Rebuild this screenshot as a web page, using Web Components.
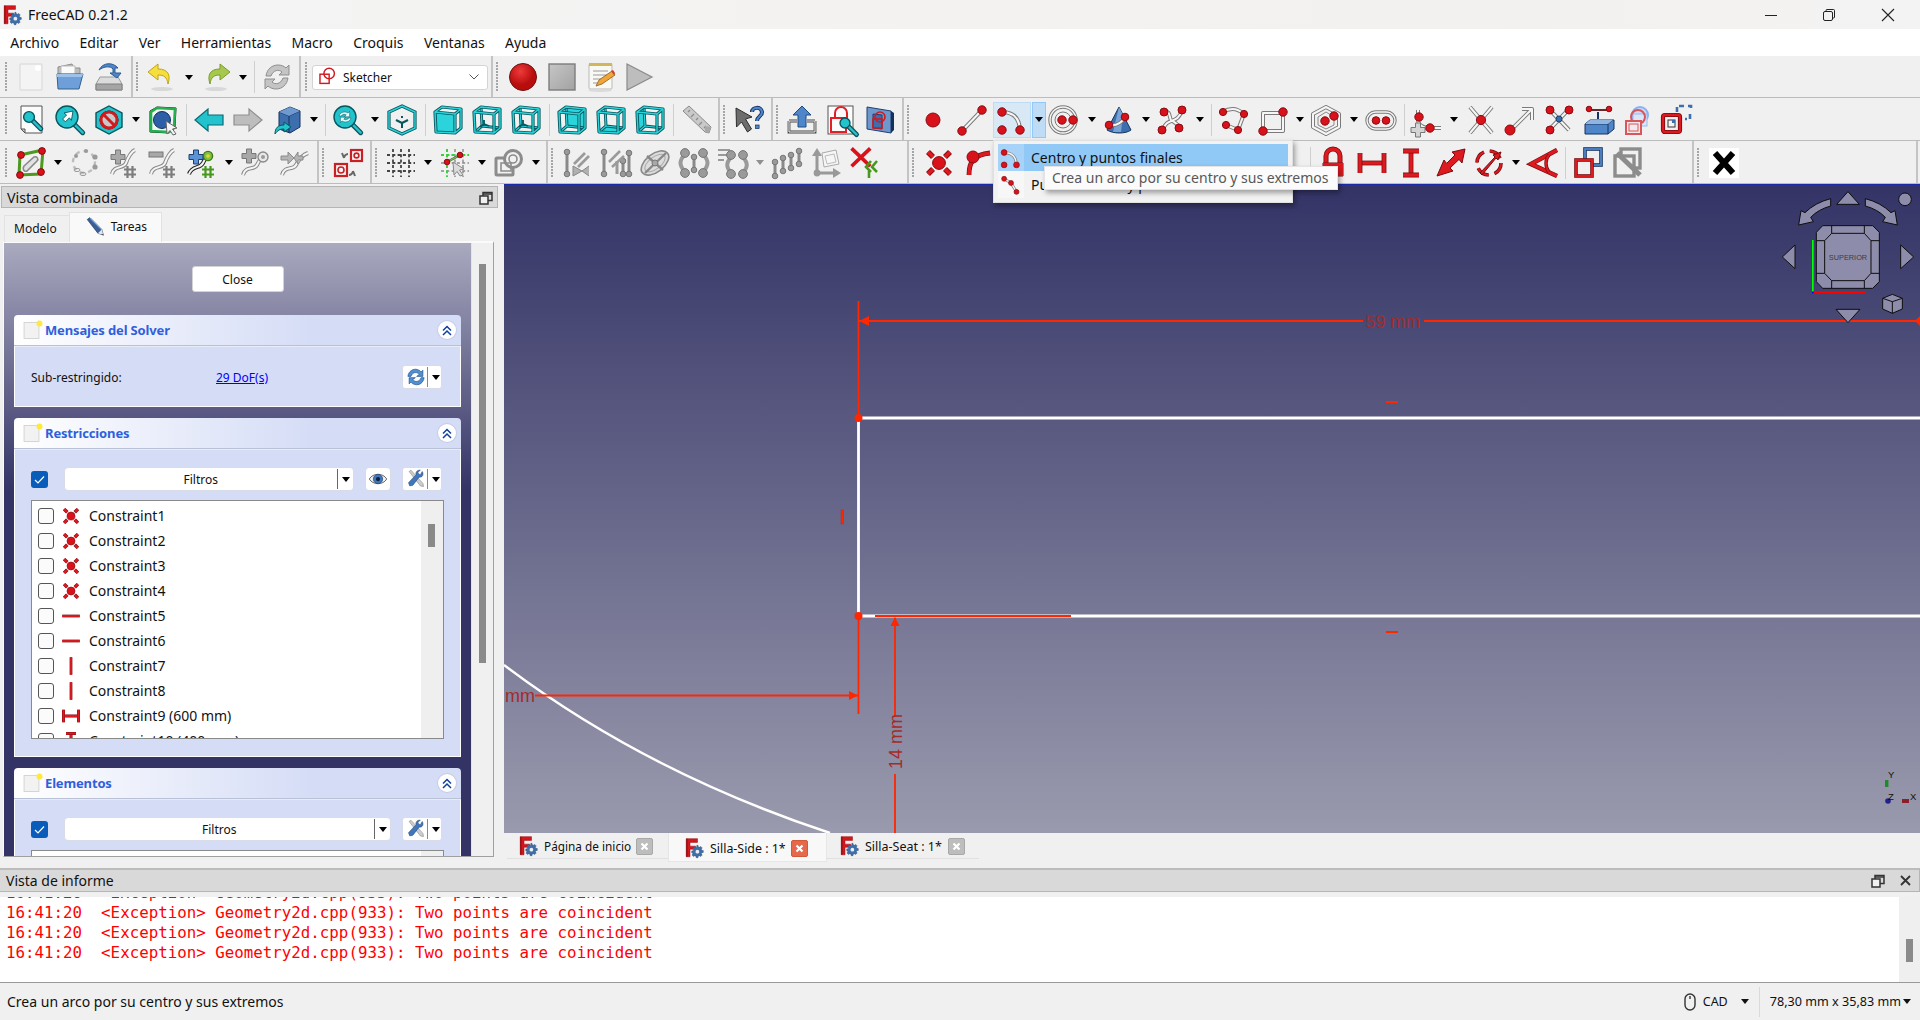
<!DOCTYPE html>
<html lang="es">
<head>
<meta charset="utf-8">
<title>FreeCAD 0.21.2</title>
<style>
  html, body { margin: 0; padding: 0; background: #f0f0f0; }
  body { width: 1920px; height: 1020px; overflow: hidden; font-family: "Noto Sans", "Open Sans", sans-serif; font-size: 14px; color: #111; }
</style>
</head>
<body>
<fc-app>
  <fc-titlebar>FreeCAD 0.21.2</fc-titlebar>
  <fc-menubar>
    <fc-menu>Archivo</fc-menu><fc-menu>Editar</fc-menu><fc-menu>Ver</fc-menu><fc-menu>Herramientas</fc-menu><fc-menu>Macro</fc-menu><fc-menu>Croquis</fc-menu><fc-menu>Ventanas</fc-menu><fc-menu>Ayuda</fc-menu>
  </fc-menubar>

  <fc-toolbar height="42">
    <fc-group first>
      <fc-tool icon="new"></fc-tool><fc-tool icon="open"></fc-tool><fc-tool icon="save"></fc-tool>
    </fc-group>
    <fc-group>
      <fc-tool icon="undo" menu></fc-tool><fc-tool icon="redo" menu></fc-tool><fc-sep></fc-sep><fc-tool icon="refresh"></fc-tool>
    </fc-group>
    <fc-group narrow><fc-workbench>Sketcher</fc-workbench></fc-group>
    <fc-group last>
      <fc-tool icon="record"></fc-tool><fc-tool icon="stop"></fc-tool><fc-tool icon="macro"></fc-tool><fc-tool icon="play"></fc-tool>
    </fc-group>
  </fc-toolbar>

  <fc-toolbar height="43">
    <fc-group first>
      <fc-tool icon="fitall"></fc-tool><fc-tool icon="fitsel"></fc-tool><fc-tool icon="nodraw" menu></fc-tool><fc-tool icon="selbox"></fc-tool><fc-sep></fc-sep>
      <fc-tool icon="back"></fc-tool><fc-tool icon="forward"></fc-tool><fc-tool icon="bluebox" menu></fc-tool><fc-sep></fc-sep>
      <fc-tool icon="zoomsync" menu></fc-tool><fc-tool icon="iso"></fc-tool><fc-sep></fc-sep>
      <fc-tool icon="vfront"></fc-tool><fc-tool icon="vtop"></fc-tool><fc-tool icon="vright"></fc-tool><fc-sep></fc-sep>
      <fc-tool icon="vrear"></fc-tool><fc-tool icon="vbottom"></fc-tool><fc-tool icon="vleft"></fc-tool><fc-sep></fc-sep>
      <fc-tool icon="ruler"></fc-tool>
    </fc-group>
    <fc-group><fc-tool icon="whatsthis"></fc-tool></fc-group>
    <fc-group><fc-tool icon="leave"></fc-tool><fc-tool icon="viewsketch"></fc-tool><fc-tool icon="sectionplane"></fc-tool></fc-group>
    <fc-group last>
      <fc-tool icon="point"></fc-tool><fc-tool icon="line"></fc-tool><fc-tool icon="arc" menu active></fc-tool><fc-tool icon="circle" menu></fc-tool><fc-tool icon="conic" menu></fc-tool><fc-tool icon="bspline" menu></fc-tool><fc-sep></fc-sep>
      <fc-tool icon="polyline"></fc-tool><fc-tool icon="rect" menu></fc-tool><fc-tool icon="polygon" menu></fc-tool><fc-tool icon="slot"></fc-tool><fc-sep></fc-sep>
      <fc-tool icon="fillet" menu></fc-tool><fc-tool icon="trim"></fc-tool><fc-tool icon="extend"></fc-tool><fc-tool icon="split"></fc-tool><fc-tool icon="external"></fc-tool><fc-tool icon="carbon"></fc-tool><fc-tool icon="construction"></fc-tool>
    </fc-group>
  </fc-toolbar>

  <fc-toolbar height="43">
    <fc-group first>
      <fc-tool icon="closedshape" menu></fc-tool><fc-tool icon="selassoc"></fc-tool><fc-tool icon="addpole"></fc-tool><fc-tool icon="subpole"></fc-tool><fc-tool icon="bluepole" menu></fc-tool><fc-tool icon="insertknot"></fc-tool><fc-tool icon="joincurve"></fc-tool>
    </fc-group>
    <fc-group><fc-tool icon="rendermode"></fc-tool></fc-group>
    <fc-group><fc-tool icon="grid" menu></fc-tool><fc-tool icon="snap" menu></fc-tool><fc-tool icon="renderorder" menu></fc-tool></fc-group>
    <fc-group>
      <fc-tool icon="symh"></fc-tool><fc-tool icon="symv"></fc-tool><fc-tool icon="ellipsecross"></fc-tool><fc-tool icon="pairs"></fc-tool><fc-tool icon="pairs2" menu dim></fc-tool><fc-tool icon="rising"></fc-tool><fc-tool icon="axes"></fc-tool><fc-tool icon="removeaxes"></fc-tool><fc-gap width="20.5"></fc-gap>
    </fc-group>
    <fc-group>
      <fc-tool icon="coincident"></fc-tool><fc-tool icon="tangent"></fc-tool>
      <fc-gap width="272"></fc-gap><fc-tool icon="block"></fc-tool><fc-sep width="5"></fc-sep>
      <fc-tool icon="lock"></fc-tool><fc-tool icon="hdist"></fc-tool><fc-tool icon="vdist"></fc-tool><fc-tool icon="dist"></fc-tool><fc-tool icon="radius" menu></fc-tool><fc-tool icon="angle"></fc-tool><fc-sep></fc-sep>
      <fc-tool icon="toggle"></fc-tool><fc-tool icon="togglegray"></fc-tool><fc-gap width="43"></fc-gap>
    </fc-group>
    <fc-group end><fc-tool icon="blackx"></fc-tool></fc-group>
  </fc-toolbar>

  <fc-workspace>
    <fc-dock slot="left" title-text="Vista combinada">
      <fc-tabs>
        <fc-tab>Modelo</fc-tab>
        <fc-tab current icon="pencil">Tareas</fc-tab>
      </fc-tabs>
      <fc-taskview>
        <fc-close-button>Close</fc-close-button>
        <fc-taskpanel title-text="Mensajes del Solver">
          <fc-solver-row label="Sub-restringido:" link="29 DoF(s)"></fc-solver-row>
        </fc-taskpanel>
        <fc-taskpanel title-text="Restricciones">
          <fc-filter-row eye></fc-filter-row>
          <fc-list thumb>
            <fc-list-row icon="coincident">Constraint1</fc-list-row>
            <fc-list-row icon="coincident">Constraint2</fc-list-row>
            <fc-list-row icon="coincident">Constraint3</fc-list-row>
            <fc-list-row icon="coincident">Constraint4</fc-list-row>
            <fc-list-row icon="lhoriz">Constraint5</fc-list-row>
            <fc-list-row icon="lhoriz">Constraint6</fc-list-row>
            <fc-list-row icon="lvert">Constraint7</fc-list-row>
            <fc-list-row icon="lvert">Constraint8</fc-list-row>
            <fc-list-row icon="hdist">Constraint9 (600 mm)</fc-list-row>
            <fc-list-row icon="vdist">Constraint10 (400 mm)</fc-list-row>
          </fc-list>
        </fc-taskpanel>
        <fc-taskpanel title-text="Elementos">
          <fc-filter-row></fc-filter-row>
          <fc-list>
            <fc-element-row></fc-element-row>
          </fc-list>
        </fc-taskpanel>
      </fc-taskview>
    </fc-dock>
    <fc-viewarea slot="right">
      <fc-viewport></fc-viewport>
      <fc-doc-tabs>
        <fc-doc-tab width="161" pad="12" end="15" size="11.8">Página de inicio</fc-doc-tab>
        <fc-doc-tab width="159" pad="16" end="18" size="12.4" current>Silla-Side : 1*</fc-doc-tab>
        <fc-doc-tab width="152" pad="13" end="14" size="12.5">Silla-Seat : 1*</fc-doc-tab>
      </fc-doc-tabs>
    </fc-viewarea>
  </fc-workspace>

  <fc-report title-text="Vista de informe">
    <fc-log-line>16:41:20  &lt;Exception&gt; Geometry2d.cpp(933): Two points are coincident</fc-log-line>
    <fc-log-line>16:41:20  &lt;Exception&gt; Geometry2d.cpp(933): Two points are coincident</fc-log-line>
    <fc-log-line>16:41:20  &lt;Exception&gt; Geometry2d.cpp(933): Two points are coincident</fc-log-line>
    <fc-log-line>16:41:20  &lt;Exception&gt; Geometry2d.cpp(933): Two points are coincident</fc-log-line>
  </fc-report>

  <fc-statusbar>Crea un arco por su centro y sus extremos</fc-statusbar>

  <fc-arc-menu></fc-arc-menu>
</fc-app>

<script>
// small drawing helpers, everything sits in a 32x32 box
const dot = (x, y, r = 4) => `<circle cx="${x}" cy="${y}" r="${r}" fill="#d8111b" stroke="#8a0b10" stroke-width="1"/>`
const grayDot = (x, y, r = 3.4) => `<circle cx="${x}" cy="${y}" r="${r}" fill="#9a9a9a" stroke="#777"/>`
const wire = (d, c = '#7a7a7a') => `<path d="${d}" fill="none" stroke="${c}" stroke-width="4" stroke-linejoin="round"/><path d="${d}" fill="none" stroke="#f6f6f6" stroke-width="2" stroke-linejoin="round"/>`
const hash = (x, y, c = '#7d7d7d') => `<path d="M${x - 2.5} ${y - 6}v12M${x + 2.5} ${y - 6}v12M${x - 6} ${y - 2.5}h12M${x - 6} ${y + 2.5}h12" stroke="${c}" stroke-width="2.2" fill="none"/>`
const plus = (x, y, f = '#a8a8a8', s = '#777') => `<path d="M${x - 2.5} ${y - 7}h5v4.5h4.5v5h-4.5v4.5h-5v-4.5h-4.5v-5h4.5z" fill="${f}" stroke="${s}"/>`
const bar = (x1, y1, x2, y2) => `<path d="M${x1} ${y1}L${x2} ${y2}" stroke="#8a8a8a" stroke-width="3"/>${grayDot(x1, y1, 2.8)}${grayDot(x2, y2, 2.8)}`
const redLine = (d, w = 3) => `<path d="${d}" fill="none" stroke="#7c0a0e" stroke-width="${w + 1.4}"/><path d="${d}" fill="none" stroke="#dc1a20" stroke-width="${w}"/>`

const cubeEdges = 'M3 8L10 3L29 5L29 24L23 29L4 28ZM3 8L23 10L23 29M23 10L29 5'
const cubeBack = 'M10 3L11 22L4 28M11 22L29 24'
const faces = {
  front: '3 8 23 10 23 29 4 28',
  back: '10 3 29 5 29 24 11 22',
  bottom: '4 28 11 22 29 24 23 29',
  left: '3 8 10 3 11 22 4 28',
}
const cube = (face, mark) => `
  ${face ? `<polygon points="${faces[face]}" fill="#2bd4da"/>` : ''}
  ${face === 'front' ? '' : `<path d="${cubeBack}" fill="none" stroke="#07565e" stroke-width="3"/><path d="${cubeBack}" fill="none" stroke="#2bd4da" stroke-width="1.2"/>`}
  <path d="${cubeEdges}" fill="none" stroke="#07565e" stroke-width="3.2" stroke-linejoin="round"/>
  <path d="${cubeEdges}" fill="none" stroke="#2bd4da" stroke-width="1.4" stroke-linejoin="round"/>
  ${mark ? '<path d="M13 16v4l-4 3M13 20l5 2" fill="none" stroke="#07565e" stroke-width="1.8"/>' : ''}`
const lens = (x, y, r, c = '#22c3cc') => `<path d="M${x + r * 0.7} ${y + r * 0.7}L${x + r * 0.7 + 8} ${y + r * 0.7 + 8}" stroke="#07565e" stroke-width="5" stroke-linecap="round"/><path d="M${x + r * 0.7} ${y + r * 0.7}L${x + r * 0.7 + 8} ${y + r * 0.7 + 8}" stroke="${c}" stroke-width="2.4" stroke-linecap="round"/><circle cx="${x}" cy="${y}" r="${r}" fill="${c}" stroke="#07565e" stroke-width="1.4"/>`
const cursor = (x, y, f = '#f4f4f4', s = '#666') => `<path d="M${x} ${y}L${x + 11} ${y + 7}L${x + 6.5} ${y + 8}L${x + 10} ${y + 13}L${x + 7} ${y + 14}L${x + 4} ${y + 9.5}L${x + 1} ${y + 13}Z" fill="${f}" stroke="${s}"/>`
const fcLogo = `
  <path d="M2 1h18v6h-12v6h9v5h-9v12h-6z" fill="#d5161c" stroke="#8c0d11" stroke-width=".8"/>
  <path d="M2 1h2v29h-2z" fill="#8c0d11"/>
  <g transform="translate(11.6 11.6)">
    <path d="M8.5 0l2.2 0 .5 2.8 2.2.9 2.3-1.6 2.8 2.8-1.6 2.3.9 2.2 2.8.5v3.4l-2.8.5-.9 2.2 1.6 2.3-2.8 2.8-2.3-1.6-2.2.9-.5 2.8h-3.4l-.5-2.8-2.2-.9-2.3 1.6-2.8-2.8 1.6-2.3-.9-2.2L-1 14v-3.4l2.8-.5.9-2.2-1.6-2.3 2.8-2.8 2.3 1.6 2.2-.9z" fill="#3f6ea8" stroke="#1f4170" stroke-width=".7" transform="scale(.86)"/>
    <circle cx="8.2" cy="10.2" r="3" fill="#e8eef6"/>
  </g>`

const icons = {
  new: '<rect x="5" y="3" width="22" height="26" rx="1" fill="#f4f4f4" stroke="#dedede" stroke-width="1.4"/><circle cx="23" cy="7" r="3" fill="#fff"/>',
  open: '<path d="M4 6l14-3 2 4h6v6H4z" fill="#bdbdbd" stroke="#8d8d8d"/><path d="M7 5h14v8H7z" fill="#fafafa" stroke="#bbb"/><path d="M3 13h26l-4 15H4z" fill="#6e9fd8" stroke="#35608f"/><path d="M3 13h26l-1 3H3z" fill="#9cc1ea"/>',
  save: '<path d="M7 16l-4 7v6h26v-6l-4-7z" fill="#dcdcdc" stroke="#9a9a9a"/><path d="M3 23h26v6H3z" fill="#a5a5a5" stroke="#808080"/><path d="M6 9C10 1 20 1 25 7l-3 0v5l6 0-4 5-7-5 3 0V8C18 5 11 5 6 9z" fill="#4f86c9" stroke="#2c5a92"/>',
  undo: '<path d="M12 3L2 11l10 8v-5c6 0 9 2 10 9 3-9 0-15-10-15z" fill="#f6df3c" stroke="#c0a415"/><ellipse cx="16" cy="28" rx="11" ry="2" fill="#d8d8d8"/>',
  redo: '<path d="M20 3l10 8-10 8v-5c-6 0-9 2-10 9-3-9 0-15 10-15z" fill="#a6c84c" stroke="#7d9b2d"/><ellipse cx="16" cy="28" rx="11" ry="2" fill="#d8d8d8"/>',
  refresh: '<path d="M5 15C6 8 11 4 17 4c3 0 6 1 8 3l3-3v10H18l3-3c-3-3-9-2-11 4z" fill="#c4c4c4" stroke="#8e8e8e"/><path d="M27 17c-1 7-6 11-12 11-3 0-6-1-8-3l-3 3V18h10l-3 3c3 3 9 2 11-4z" fill="#c4c4c4" stroke="#8e8e8e"/>',
  sketcher: '<rect x="3" y="11" width="14" height="14" fill="none" stroke="#d01a20" stroke-width="2.2"/><circle cx="17" cy="10" r="8" fill="none" stroke="#d01a20" stroke-width="2.2"/>',
  record: '<defs><radialGradient id="r" cx=".4" cy=".3"><stop offset="0" stop-color="#ee3a3a"/><stop offset="1" stop-color="#b80d0d"/></radialGradient></defs><circle cx="16" cy="16" r="13.5" fill="url(#r)" stroke="#6d1010"/>',
  stop: '<defs><linearGradient id="s" x2="1" y2="1"><stop offset="0" stop-color="#c6c6c6"/><stop offset="1" stop-color="#a2a2a2"/></linearGradient></defs><rect x="3" y="3" width="26" height="26" fill="url(#s)" stroke="#7d7d7d" stroke-width="1.4"/>',
  macro: '<rect x="4" y="3" width="23" height="25" rx="1" fill="#f8f8f4" stroke="#b9b9b9"/><rect x="4" y="2" width="23" height="3" fill="#d2b65a"/><path d="M8 10h15M8 14h15M8 18h11M8 22h8" stroke="#9a9a9a" stroke-width="1.2"/><path d="M11 25l3-6 13-9 3 4-13 9z" fill="#f0a53a" stroke="#8a5a14" stroke-width=".8"/><path d="M26 10l3 4 1-2-2-3z" fill="#d23c2c"/><ellipse cx="15" cy="29.5" rx="12" ry="1.5" fill="#dadada"/>',
  play: '<path d="M3 3l25 13L3 29z" fill="#bdbdbd" stroke="#8a8a8a" stroke-width="1.2"/>',

  fitall: `<path d="M6 2h21v27H10l-4-4z" fill="#fbfbfb" stroke="#555"/><path d="M6 25l4 4v-4z" fill="#ccc" stroke="#555"/>${lens(14, 13, 5.4)}`,
  fitsel: `${lens(13, 13, 11)}<path d="M19 7l-9 2 2.6 2-4 4 2.8 2.8 4-4 2 2.6z" fill="#fff" stroke="#07565e" stroke-width=".9"/>`,
  nodraw: '<path d="M16 2l13 7v14l-13 7L3 23V9z" fill="#22c3cc" stroke="#07565e" stroke-width="1.4"/><circle cx="16" cy="16" r="9" fill="#c8c8c8" stroke="#101010" stroke-width="1"/><circle cx="16" cy="16" r="8" fill="none" stroke="#cf1a20" stroke-width="3"/><path d="M10 10l12 12" stroke="#cf1a20" stroke-width="3"/>',
  selbox: `<path d="M3 7L10 3L29 4L28 24L22 29L3 28Z" fill="#f4f4f4" stroke="#1a1a1a" stroke-width="1"/><path d="M4 8l6-4 18 1-1 19-5 4-18-1z" fill="none" stroke="#22b14c" stroke-width="2.6"/><circle cx="15" cy="16" r="8.5" fill="#2d5fa6" stroke="#11305f"/>${cursor(19, 17)}`,
  back: '<path d="M2 16L15 5v6h15v10H15v6z" fill="#22c3cc" stroke="#0a6a74" stroke-width="1.2"/>',
  forward: '<path d="M30 16L17 5v6H2v10h15v6z" fill="#bdbdbd" stroke="#8f8f8f" stroke-width="1.2"/>',
  bluebox: '<path d="M8 8l11-5 10 4v16l-10 6-11-4z" fill="#3d6eae" stroke="#14335f"/><path d="M8 8l10 4 11-5M18 12v17" fill="none" stroke="#14335f"/><path d="M8 8l10 4 11-5-10-4z" fill="#6e9ad0"/><path d="M4 30c0-6 3-9 9-9v-3l7 5-7 5v-3c-4 0-6 1-9 5z" fill="#22c3cc" stroke="#07565e"/>',
  zoomsync: `${lens(13, 13, 11)}<path d="M7 12c1-4 6-5 9-3l1.6-1.6v5.4h-5.4l2-2c-2-1-4-.4-5 1.2zM19 14c-1 4-6 5-9 3l-1.6 1.6v-5.4h5.4l-2 2c2 1 4 .4 5-1.2z" fill="#e8f8f8" stroke="#07565e" stroke-width=".5"/>`,
  iso: '<path d="M16 2l13 6v16l-13 6-13-6V8z" fill="none" stroke="#07565e" stroke-width="3.2"/><path d="M16 2l13 6v16l-13 6-13-6V8z" fill="none" stroke="#2bd4da" stroke-width="1.4"/><path d="M16 19v5M16 19l-6-3M16 19l6-3" stroke="#07565e" stroke-width="2"/><path d="M16 12v2" stroke="#07565e" stroke-width="2"/>',
  vfront: cube('front'),
  vtop: cube(null, true),
  vright: cube(null, true),
  vrear: cube('back'),
  vbottom: cube('bottom'),
  vleft: cube('left'),
  ruler: '<path d="M3 7l6-5 22 21-2 6-4-1z" fill="#c9c9c9" stroke="#8b8b8b"/><path d="M10 6l-2 2M14 10l-3 3M18 14l-2 2M22 18l-3 3M26 22l-2 2" stroke="#8b8b8b" stroke-width="1.2"/><path d="M25 28v-6l6 1-2 6z" fill="#a9a9a9"/>',
  whatsthis: '<path d="M3 4l16 9-6.5 2 6 10-4 3-6-10-5 5z" fill="#6d6d6d" stroke="#2d2d2d"/><path d="M19 8c0-5 9-6 10 0 0 5-5 4-5 9" fill="none" stroke="#14305f" stroke-width="4"/><path d="M19 8c0-5 9-6 10 0 0 5-5 4-5 9" fill="none" stroke="#4f86c9" stroke-width="2.2"/><rect x="22.5" y="21" width="3.6" height="3.6" fill="#4f86c9" stroke="#14305f" stroke-width=".7"/>',
  leave: '<path d="M3 17h8M21 17h8M3 17v11h26V17" fill="none" stroke="#444" stroke-width="2.8"/><path d="M3 17h8M21 17h8M3 17v11h26V17" fill="none" stroke="#f4f4f4" stroke-width="1"/><path d="M12 23V11H7l9-9 9 9h-5v12z" fill="#4f86c9" stroke="#1e4a80"/>',
  viewsketch: `<rect x="3" y="2" width="25" height="28" fill="#fbfbfb" stroke="#555"/><rect x="6" y="14" width="15" height="14" fill="none" stroke="#e01f26" stroke-width="2"/><path d="M10 14V9a6 6 0 0 1 12 0v6" fill="none" stroke="#e01f26" stroke-width="2"/>${lens(20, 19, 5)}`,
  sectionplane: '<path d="M3 3l24 4 0 22-24-4z" fill="#6e98cc" stroke="#1c3f70"/><path d="M27 7l3 2v17l-3 3z" fill="#12325c"/><path d="M9 10l9 1v14l-9-1z" fill="#3d6eae" stroke="#1c3f70"/><rect x="9" y="15" width="9" height="9" fill="none" stroke="#d01a20" stroke-width="1.6"/><circle cx="16" cy="13" r="5" fill="none" stroke="#d01a20" stroke-width="1.6"/>',

  point: dot(16, 16, 7),
  line: `${wire('M6 27L26 6')}${dot(6, 27, 4.2)}${dot(26, 6, 4.2)}`,
  arc: `${wire('M6 8Q23 8 24 26')}${dot(6, 8, 4.2)}${dot(6, 26, 4.2)}${dot(24, 26, 4.2)}`,
  arc3: `${wire('M6 7L16 13L24 26')}${dot(6, 7, 3.6)}${dot(16, 13, 3.6)}${dot(24, 26, 3.6)}`,
  circle: `<circle cx="14" cy="16" r="13" fill="none" stroke="#7a7a7a" stroke-width="3.4"/><circle cx="14" cy="16" r="13" fill="none" stroke="#f6f6f6" stroke-width="1.4"/><circle cx="14" cy="16" r="8" fill="none" stroke="#7a7a7a"/>${dot(13, 16, 4.2)}${dot(24, 16, 4.2)}`,
  conic: `<path d="M16 3L28 26c-5 4-18 4-24 0z" fill="#3d6eae" stroke="#14335f"/><path d="M16 3l4 8-2 17-8 0z" fill="#77a3d6"/>${wire('M7 21C14 22 20 18 22 12')}${dot(6, 21, 3.8)}${dot(22, 13, 3.8)}`,
  bspline: `${wire('M6 26C10 12 20 22 25 6M7 8C14 6 12 14 14 16C16 18 20 18 22 24')}${dot(7, 8, 4)}${dot(25, 6, 4)}${dot(5, 26, 4)}${dot(22, 24, 4)}`,
  polyline: `${wire('M5 8Q16 1 26 10L20 26L8 21')}${dot(5, 8, 3.6)}${dot(26, 10, 3.6)}${dot(8, 21, 3.6)}${dot(20, 26, 3.6)}`,
  rect: `${wire('M6 9H26V27H6Z')}${dot(26, 8, 4.2)}${dot(6, 27, 4.2)}`,
  polygon: `${wire('M15 3L28 10V23L15 30L2 23V10Z')}<path d="M15 8L23 13V21L15 25L7 21V13Z" fill="none" stroke="#888"/>${dot(14, 17, 4.2)}${dot(23, 12, 4.2)}`,
  slot: `<rect x="2" y="8" width="28" height="17" rx="8.5" fill="none" stroke="#7a7a7a" stroke-width="3.4"/><rect x="2" y="8" width="28" height="17" rx="8.5" fill="none" stroke="#f6f6f6" stroke-width="1.4"/>${dot(11, 16.5, 3.8)}${dot(21, 16.5, 3.8)}`,
  fillet: `${wire('M7 6V16M7 16Q7 22 16 24H30')}${plus(7, 26, '#d4d4d4', '#777')}${dot(8, 13, 4.2)}${dot(19, 24, 4.2)}`,
  trim: `${wire('M5 3L27 29M27 3L5 29')}${dot(16, 16, 4.6)}`,
  extend: `${wire('M6 27L28 5M18 5H28V16')}${dot(6, 26, 5)}`,
  split: `${wire('M6 5L26 26M26 5L6 26')}<circle cx="16" cy="15" r="3" fill="#3d6eae" stroke="#1c3f70"/>${dot(7, 6, 4)}${dot(26, 6, 4)}${dot(7, 26, 4)}`,
  external: `<path d="M3 20l5-4h24v9l-6 5H3z" fill="#4f86c9" stroke="#14335f"/><path d="M3 20h23v10M26 20l5-4" fill="none" stroke="#14335f"/><path d="M3 20h23l5-4H8z" fill="#8fb5e0"/><path d="M16 15V8" stroke="#14335f" stroke-width="2"/><path d="M5 6h22" stroke="#6a2a2a" stroke-width="2"/>${dot(7, 5, 2.8)}${dot(27, 5, 2.8)}`,
  carbon: '<circle cx="19" cy="11" r="8" fill="#cbdcf8" stroke="#8ab0ef" stroke-width="2"/><rect x="12" y="10" width="14" height="12" fill="#dbe6fa" stroke="#9ab9ef"/><circle cx="17" cy="13" r="7" fill="none" stroke="#d8565a" stroke-width="2"/><rect x="5" y="17" width="15" height="13" fill="#f3e8ec" stroke="#d8565a" stroke-width="2"/><rect x="8" y="20" width="9" height="7" fill="none" stroke="#d8565a"/>',
  construction: '<path d="M17 8V2h7M28 2h3v4M30 10v5h-5M21 16h-3" fill="none" stroke="#3d6eae" stroke-width="2.6" stroke-dasharray="5 3"/><rect x="3" y="11" width="17" height="17" rx="2" fill="none" stroke="#7c0a0e" stroke-width="4.2"/><rect x="3" y="11" width="17" height="17" rx="2" fill="none" stroke="#dc1a20" stroke-width="2.4"/><rect x="8" y="16" width="7" height="7" fill="#f4f4f4" stroke="#333"/><rect x="12" y="16" width="3" height="3" fill="#3d6eae"/>',

  closedshape: `<path d="M5 8L28 3L26 27L4 28Z" fill="#f2f2f2" stroke="#4c9a20" stroke-width="3"/><path d="M9 19L19 10c3-1 5 2 3 4L12 24c-3 1-5-2-3-5z" fill="#e2e2e2" stroke="#8a8a8a" stroke-width="1.6"/>${dot(6, 8, 3.4)}${dot(27, 4, 3.4)}${dot(26, 25, 3.4)}${dot(5, 28, 3.4)}`,
  selassoc: '<circle cx="15" cy="15" r="11" fill="none" stroke="#bdbdbd" stroke-width="2.4" stroke-dasharray="4.5 4"/><circle cx="7" cy="9" r="2" fill="#9a9a9a"/><circle cx="17" cy="4" r="2" fill="#9a9a9a"/><circle cx="26" cy="10" r="2.6" fill="#9a9a9a"/><circle cx="26" cy="20" r="2.6" fill="#9a9a9a"/><ellipse cx="14" cy="27" rx="3" ry="1.6" fill="none" stroke="#9a9a9a"/><ellipse cx="8" cy="23" rx="3" ry="1.6" fill="none" stroke="#9a9a9a"/>',
  addpole: `${wire('M4 27C6 18 16 22 18 16S24 4 27 3', '#8a8a8a')}${plus(10, 10)}${hash(22, 25)}`,
  subpole: `${wire('M4 27C6 18 16 22 18 16S24 4 27 3', '#8a8a8a')}<rect x="2" y="5" width="14" height="5" fill="#a8a8a8" stroke="#777"/>${hash(22, 25)}`,
  bluepole: `${wire('M3 27C6 18 14 22 17 16S21 8 26 8', '#222')}${plus(10, 10, '#5b92d5', '#1c3f70')}<circle cx="22" cy="9" r="4.6" fill="#7fc241" stroke="#3f7a16" stroke-width="1.4"/><circle cx="22" cy="9" r="1.8" fill="#e7d82d"/>${hash(22, 25, '#47991d')}`,
  insertknot: `${wire('M3 28C6 18 14 24 17 18S20 12 24 12', '#8a8a8a')}${plus(9, 9)}<circle cx="23" cy="10" r="5" fill="#e8e8e8" stroke="#8a8a8a" stroke-width="1.4"/><circle cx="23" cy="10" r="2" fill="#9a9a9a"/>`,
  joincurve: `${wire('M3 28C6 18 14 24 17 18S23 8 29 6', '#8a8a8a')}<path d="M2 9h7V5l6 6-6 6v-4H2zM24 9h-5V5l-4 6 4 6v-4h5z" fill="#b4b4b4" stroke="#8a8a8a"/>`,
  rendermode: '<rect x="19" y="3" width="11" height="11" fill="#f4f4f4" stroke="#c82025" stroke-width="2.2"/><circle cx="24.5" cy="8.5" r="2.4" fill="none" stroke="#c82025" stroke-width="1.6"/><rect x="3" y="17" width="12" height="12" fill="#f4f4f4" stroke="#c82025" stroke-width="2.2"/><circle cx="9" cy="23" r="3" fill="none" stroke="#c82025" stroke-width="1.6"/><path d="M12 11c0-2 2-4 4-4M10 6l2 5M21 24c0 2-2 4-4 4M23 29l-2-5" fill="none" stroke="#666" stroke-width="2"/>',
  grid: '<path d="M2 8H30M2 16H30M2 24H30M8 2V30M16 2V30M24 2V30" stroke="#444" stroke-width="1.8" stroke-dasharray="3 2.3" fill="none"/>',
  snap: `<path d="M2 8H30M2 16H30M2 24H30M8 2V30M16 2V30M24 2V30" stroke="#8a8a8a" stroke-width="1.4" stroke-dasharray="3 2.3" fill="none"/><path d="M2 8H30M8 2V30" stroke="#31d33a" stroke-width="1.8" stroke-dasharray="3 2.3" fill="none"/><path d="M8 15L21 8" stroke="#555" stroke-width="2.4"/><path d="M8 15L21 8" stroke="#6fc64b" stroke-width="1.4"/>${dot(8, 15, 2.8)}${dot(21, 8, 2.8)}${cursor(14, 15, '#dcdcdc', '#888')}`,
  renderorder: '<rect x="3" y="11" width="17" height="17" rx="1" fill="#f1f1f1" stroke="#8c8c8c" stroke-width="3"/><circle cx="20" cy="12" r="8.5" fill="#f1f1f1" stroke="#8c8c8c" stroke-width="3"/><path d="M8 16h10v8H8z" fill="none" stroke="#8c8c8c" stroke-width="1.6"/><circle cx="20" cy="12" r="4" fill="none" stroke="#8c8c8c" stroke-width="1.6"/>',
  symh: `${bar(6, 5, 6, 27)}<path d="M13 17L24 6M17 20L28 9" stroke="#9a9a9a" stroke-width="2.8"/><path d="M12 19l9 5-9 5zM28 19l-7 5 7 5" fill="#b0b0b0" stroke="#888"/>`,
  symv: `${bar(4, 5, 4, 27)}${bar(23, 14, 23, 27)}${bar(29, 6, 29, 27)}<path d="M9 15L20 4M12 20L24 9" stroke="#9a9a9a" stroke-width="2.6"/><path d="M17 14v13" stroke="#9a9a9a" stroke-width="3"/>`,
  ellipsecross: '<ellipse cx="16" cy="16" rx="16" ry="9" transform="rotate(-38 16 16)" fill="#dcdcdc" stroke="#8a8a8a" stroke-width="1.6"/><ellipse cx="16" cy="16" rx="12" ry="6" transform="rotate(-38 16 16)" fill="none" stroke="#a9a9a9"/><path d="M8 9L24 23M27 6L6 26" stroke="#888" stroke-width="2.4"/><circle cx="16" cy="16" r="3" fill="#a8a8a8" stroke="#777"/>',
  pairs: `<path d="M7 7C1 14 1 18 7 25M25 7C31 14 31 18 25 25" fill="none" stroke="#9a9a9a" stroke-width="4"/>${bar(16, 10, 16, 23)}${grayDot(7, 6, 4.4)}${grayDot(25, 6, 4.4)}${grayDot(7, 26, 4.4)}${grayDot(25, 26, 4.4)}`,
  pairs2: `<path d="M1 3h12M1 8h9M1 13h6" stroke="#9a9a9a" stroke-width="2"/><path d="M14 10C9 16 9 20 14 26M26 10C31 16 31 20 26 26" fill="none" stroke="#9a9a9a" stroke-width="4"/>${grayDot(14, 8, 4.4)}${grayDot(26, 8, 4.4)}${grayDot(14, 27, 4.4)}${grayDot(26, 27, 4.4)}`,
  rising: `${bar(4, 15, 4, 29)}${bar(12, 11, 12, 24)}${bar(20, 8, 20, 21)}${bar(28, 4, 28, 17)}`,
  axes: '<path d="M7 26V5" stroke="#999" stroke-width="3"/><path d="M7 1l5 8H2z" fill="#999"/><path d="M7 26H27" stroke="#999" stroke-width="3"/><path d="M31 26l-8 5V21z" fill="#999"/><circle cx="7" cy="26" r="3.4" fill="#999"/><path d="M12 6l14-3 3 14-15 3z" fill="#f6f6f6" stroke="#aaa"/><path d="M15 9l9-2 2 8-9 2z" fill="none" stroke="#bbb"/>',
  removeaxes: '<path d="M3 4L25 25M25 4L3 25" stroke="#d8111b" stroke-width="4.4" transform="translate(0 -2) scale(.85)"/><path d="M22 14l-5 6 5 5M28 14l-5 6 5 5M20 24v7" fill="none" stroke="#47991d" stroke-width="2.6"/>',
  coincident: `<path d="M5 5l5 5M27 5l-5 5M5 27l5-5M27 27l-5-5" stroke="#8a0b10" stroke-width="5.6"/><path d="M5 5l5 5M27 5l-5 5M5 27l5-5M27 27l-5-5" stroke="#dc1a20" stroke-width="3.6"/>${dot(16, 16, 6.4)}`,
  tangent: `${redLine('M7 28C7 14 12 8 28 6', 3.4)}${dot(11, 10, 6)}`,
  block: `<path d="M-8 6C3 8 4 22 -6 26" fill="none" stroke="#7c0a0e" stroke-width="4.4"/><path d="M-8 6C3 8 4 22 -6 26" fill="none" stroke="#dc1a20" stroke-width="3"/>`,
  lock: `<path d="M9 17V9a7 7 0 0 1 14 0v8" fill="none" stroke="#7c0a0e" stroke-width="5"/><path d="M9 17V9a7 7 0 0 1 14 0v8" fill="none" stroke="#dc1a20" stroke-width="3.4"/><path d="M6 16h20v13H6z" fill="#f4f4f4" stroke="#7c0a0e" stroke-width="1"/><path d="M6 16h20v4H6zM6 25h20v4H6zM6 20h5v5H6zM21 20h5v5h-5z" fill="#dc1a20"/>`,
  hdist: `${redLine('M5 16H27', 3.4)}${redLine('M4 6V26M28 6V26', 3.4)}`,
  vdist: `${redLine('M16 5V27', 3.4)}${redLine('M8 4H24M8 28H24', 3.4)}`,
  lhoriz: `${redLine('M2 16H30', 3)}`,
  lvert: `${redLine('M16 2V30', 3)}`,
  dist: '<path d="M3 29L10 13l2.6 3.4L21 8l-3-3 13-3-3 14-3-3.6L16 21l3 3z" fill="#dc1a20" stroke="#7c0a0e" stroke-linejoin="round"/>',
  radius: `<circle cx="16" cy="16" r="12" fill="none" stroke="#7c0a0e" stroke-width="3.6" stroke-dasharray="13 6"/><circle cx="16" cy="16" r="12" fill="none" stroke="#dc1a20" stroke-width="2" stroke-dasharray="13 6"/><path d="M7 26L22 10l-2-2 8-3-3 8-2-2L9 28z" fill="#dc1a20" stroke="#7c0a0e"/>`,
  angle: `${redLine('M30 3L4 17L30 29', 3.2)}<path d="M22 8C18 12 18 20 22 25" fill="none" stroke="#7c0a0e" stroke-width="3.4"/><path d="M22 8C18 12 18 20 22 25" fill="none" stroke="#dc1a20" stroke-width="2"/>`,
  toggle: '<rect x="12" y="2" width="16" height="16" fill="none" stroke="#14335f" stroke-width="3.6"/><rect x="12" y="2" width="16" height="16" fill="none" stroke="#4f86c9" stroke-width="1.8"/><rect x="3" y="13" width="16" height="16" fill="#f0f0f0" stroke="#7c0a0e" stroke-width="3.6"/><rect x="3" y="13" width="16" height="16" fill="none" stroke="#dc1a20" stroke-width="2"/>',
  togglegray: '<rect x="9" y="2" width="19" height="19" fill="none" stroke="#8c8c8c" stroke-width="3.4"/><rect x="3" y="9" width="19" height="20" fill="#f0f0f0" stroke="#8c8c8c" stroke-width="3.4"/><path d="M5 6L28 28" stroke="#8c8c8c" stroke-width="5"/>',
  blackx: '<rect x="1" y="1" width="30" height="30" fill="#fff"/><path d="M7 6L25 26M25 6L7 26" stroke="#000" stroke-width="6"/>',

  fc: fcLogo,
  pencil: '<path d="M2 4L6 1L25 20L28 29L19 26Z" fill="#3b5f96" stroke="#16315c"/><path d="M7 2L26 21" stroke="#7fa3d2" stroke-width="2"/><path d="M19 26l3-3 3-3 3 9z" fill="#e7e7e7"/><path d="M25.5 26.5L28 29l-3.2-1z" fill="#111"/>',
  sync: '<path d="M3 15C4 7 11 2 18 4c3 1 5 2 6 4l3-3v10H17l4-3c-3-5-11-4-13 3z" fill="#4f8fd2" stroke="#1c4f8c"/><path d="M29 17c-1 8-8 13-15 11-3-1-5-2-6-4l-3 3V17h10l-4 3c3 5 11 4 13-3z" fill="#4f8fd2" stroke="#1c4f8c"/>',
  eye: '<path d="M2 16C8 6 24 6 30 16C24 26 8 26 2 16Z" fill="#f2f2f2" stroke="#6a6a6a" stroke-width="1.6"/><circle cx="16" cy="16" r="7.5" fill="#3f77ba" stroke="#1c3f70"/><circle cx="16" cy="16" r="3.4" fill="#0d1f3d"/>',
  tools: '<path d="M5 4l3-2 19 21 1 5-5-1z" fill="#cfcfcf" stroke="#8a8a8a"/><path d="M26 4l-3 5-3-1-1-3 4-3c-4-1-8 2-7 7L4 22l2 5 5-1 10-13c5 1 8-4 5-9z" fill="#3f77ba" stroke="#1c3f70" stroke-width=".8"/>',
  sheet: '<rect x="2" y="1" width="28" height="30" fill="#f2f2f2" stroke="#cfcfcf" stroke-width="1.6"/>',
}

class FcIcon extends HTMLElement {
  connectedCallback() {
    if (this.shadowRoot) return
    const size = this.getAttribute('size') || 32
    this.attachShadow({ mode: 'open' }).innerHTML = `
      <style>:host { display: inline-flex; width: ${size}px; height: ${size}px; flex: none; } svg { overflow: visible; display: block; }</style>
      <svg width="${size}" height="${size}" viewBox="0 0 32 32">${icons[this.getAttribute('name')] || ''}</svg>`
  }
}

class FcApp extends HTMLElement {
  constructor() {
    super()
    this.attachShadow({ mode: 'open' }).innerHTML = `
      <style>:host { display: flex; flex-direction: column; position: relative; width: 1920px; height: 1020px; overflow: hidden; }</style>
      <slot></slot>`
  }
}

class FcTitlebar extends HTMLElement {
  constructor() {
    super()
    this.attachShadow({ mode: 'open' }).innerHTML = `
      <style>
        :host { display: flex; align-items: center; height: 29px; flex: none; background: linear-gradient(90deg, #f4f4f4, #f3f1ef 80%, #f3f3f3); font-size: 14px; padding-left: 3px; }
        #title { margin-left: 5px; margin-top: -1px; }
        #controls { display: flex; margin-left: auto; margin-right: 3px; }
        .win { width: 58.5px; height: 29px; display: flex; align-items: center; justify-content: center; }
      </style>
      <fc-icon name="fc" size="20"></fc-icon>
      <span id="title"><slot></slot></span>
      <div id="controls">
        <div class="win"><svg width="14" height="14"><path d="M1 7.5H13" stroke="#222"/></svg></div>
        <div class="win"><svg width="14" height="14"><rect x="1.5" y="3.5" width="9" height="9" rx="1.5" fill="none" stroke="#222"/><path d="M4 3.5V2.5a1 1 0 0 1 1-1h6.5a1 1 0 0 1 1 1V9a1 1 0 0 1-1 1h-1" fill="none" stroke="#222"/></svg></div>
        <div class="win"><svg width="14" height="14"><path d="M1 1L13 13M13 1L1 13" stroke="#222" stroke-width="1.1"/></svg></div>
      </div>`
  }
}

class FcMenubar extends HTMLElement {
  constructor() {
    super()
    this.attachShadow({ mode: 'open' }).innerHTML = `
      <style>:host { display: flex; align-items: center; height: 27px; flex: none; background: #fff; }</style>
      <slot></slot>`
  }
}

class FcMenu extends HTMLElement {
  constructor() {
    super()
    this.attachShadow({ mode: 'open' }).innerHTML = `
      <style>:host { display: block; padding: 0 10.2px; font-size: 14px; }</style>
      <slot></slot>`
  }
}

class FcToolbar extends HTMLElement {
  connectedCallback() {
    if (this.shadowRoot) return
    this.attachShadow({ mode: 'open' }).innerHTML = `
      <style>
        :host { display: flex; height: ${this.getAttribute('height')}px; flex: none; box-sizing: border-box; border-bottom: 1px solid #bcbcbc; background: #f0f0f0; padding: 1px 2px 0 0; }
      </style>
      <slot></slot>`
  }
}

class FcGroup extends HTMLElement {
  constructor() {
    super()
    this.attachShadow({ mode: 'open' }).innerHTML = `
      <style>
        :host { display: flex; align-items: center; box-sizing: border-box; padding-left: 10px; padding-right: 2px; border-right: 2px solid #c4c4c4; flex: none; position: relative; margin-top: -1px; padding-top: 1px; }
        :host([first]) { padding-left: 11.5px; }
        :host([narrow]) { padding-left: 11.5px; padding-right: 3px; }
        :host([last]) { flex: 1; border-right: 0; }
        :host([end]) { flex: 1; }
        #grip { width: 3px; height: 30px; margin: 0 0 0 -7px; margin-right: 4px; flex: none;
          background: radial-gradient(circle at 1px 1px, #a6a6a6 1px, transparent 1.2px) 0 0 / 3px 3px; }
      </style>
      <div id="grip"></div>
      <slot></slot>`
  }
}

class FcSep extends HTMLElement {
  connectedCallback() {
    if (this.shadowRoot) return
    const width = this.getAttribute('width') || 7
    this.attachShadow({ mode: 'open' }).innerHTML = `
      <style>
        :host { display: flex; justify-content: center; width: ${width}px; height: 32px; flex: none; }
        div { width: 1px; height: 100%; background: #cfcfcf; }
      </style>
      <div></div>`
  }
}

class FcGap extends HTMLElement {
  connectedCallback() {
    if (this.shadowRoot) return
    this.attachShadow({ mode: 'open' }).innerHTML = `
      <style>:host { display: block; width: ${this.getAttribute('width')}px; flex: none; }</style>`
  }
}

class FcTool extends HTMLElement {
  connectedCallback() {
    if (this.shadowRoot) return
    const menu = this.hasAttribute('menu')
    this.attachShadow({ mode: 'open' }).innerHTML = `
      <style>
        :host { display: flex; flex: none; height: 36px; align-items: stretch; }
        #btn { width: 39px; display: flex; align-items: center; justify-content: center; box-sizing: border-box; }
        #more { width: 15px; display: flex; align-items: center; justify-content: center; box-sizing: border-box; }
        #more i { display: block; width: 0; height: 0; border: 4.5px solid transparent; border-top: 5px solid #000; border-bottom: 0; }
        :host([dim]) #more i { border-top-color: #8f8f8f; }
        :host([active]) #btn { background: #d9e8f5; border: 1px solid #bcdcf7; width: 38px; margin-left: 1px; }
        :host([active]) #more { background: #bfdcf6; border: 1px solid #93c9f6; margin-left: 1px; width: 14px; }
      </style>
      <div id="btn"><fc-icon name="${this.getAttribute('icon')}"></fc-icon></div>
      ${menu ? '<div id="more"><i></i></div>' : ''}`
  }
}

class FcWorkbench extends HTMLElement {
  constructor() {
    super()
    this.attachShadow({ mode: 'open' }).innerHTML = `
      <style>
        :host { display: flex; align-items: center; box-sizing: border-box; width: 176px; height: 25px; background: #fff; border: 1px solid #d4d4d4; border-radius: 3px; font-size: 12px; padding: 0 8px 0 5px; flex: none; }
        #name { margin-left: 4px; }
        svg { margin-left: auto; }
      </style>
      <fc-icon name="sketcher" size="21"></fc-icon>
      <span id="name"><slot></slot></span>
      <svg width="10" height="6"><path d="M.5 .5L5 5 9.5 .5" fill="none" stroke="#555"/></svg>`
  }
}

class FcWorkspace extends HTMLElement {
  constructor() {
    super()
    this.attachShadow({ mode: 'open' }).innerHTML = `
      <style>
        :host { display: grid; grid-template-columns: 504px 1fr; height: 684px; flex: none; background: #f0f0f0; }
      </style>
      <slot name="left"></slot>
      <slot name="right"></slot>`
  }
}

const floatIcon = `<svg width="14" height="14"><rect x="1" y="5" width="8" height="8" fill="#f0f0f0" stroke="#333" stroke-width="1.5"/><path d="M4 5V1.5H13V9.5H9" fill="none" stroke="#333" stroke-width="1.5"/><path d="M4 3H13" stroke="#333" stroke-width="1.5"/></svg>`

class FcDock extends HTMLElement {
  connectedCallback() {
    if (this.shadowRoot) return
    this.attachShadow({ mode: 'open' }).innerHTML = `
      <style>
        :host { display: flex; flex-direction: column; min-height: 0; padding: 2px 6px 11px 0; box-sizing: border-box; }
        #head { display: flex; align-items: center; justify-content: space-between; box-sizing: border-box; height: 22px; margin-left: 1px; padding: 1px 4px 0 5px; background: #d9d9d9; border: 1px solid #b5b5b5; font-size: 14.3px; flex: none; }
        #body { display: flex; flex-direction: column; flex: 1; min-height: 0; margin-top: 4px; }
      </style>
      <div id="head"><span>${this.getAttribute('title-text')}</span>${floatIcon}</div>
      <div id="body"><slot></slot></div>`
  }
}

class FcTabs extends HTMLElement {
  constructor() {
    super()
    this.attachShadow({ mode: 'open' }).innerHTML = `
      <style>:host { display: flex; align-items: flex-end; height: 30px; padding-left: 4px; flex: none; margin-bottom: -1px; position: relative; z-index: 1; }</style>
      <slot></slot>`
  }
}

class FcTab extends HTMLElement {
  connectedCallback() {
    if (this.shadowRoot) return
    const icon = this.getAttribute('icon')
    this.attachShadow({ mode: 'open' }).innerHTML = `
      <style>
        :host { display: flex; align-items: center; gap: 5px; box-sizing: border-box; height: 27px; padding: 0 12px 1px 9px; font-size: 12px; background: #f0f0f0; border: 1px solid #e2e2e2; border-bottom: 0; }
        :host([current]) { height: 30px; background: #f9f9f9; padding: 0 14px 2px 16px; margin-left: -1px; }
      </style>
      ${icon ? `<fc-icon name="${icon}" size="20"></fc-icon>` : ''}
      <slot></slot>`
  }
}

class FcTaskview extends HTMLElement {
  constructor() {
    super()
    this.attachShadow({ mode: 'open' }).innerHTML = `
      <style>
        :host { display: flex; flex: 1; min-height: 0; margin: 0 4px 0 3px; box-sizing: border-box; border: 1px solid #a0a0a0; border-top-color: #fafafa; border-left-color: #fafafa; border-top-width: 2px; background: #f0f0f0; }
        #scroll { width: 467px; height: 100%; overflow: hidden; flex: none; box-sizing: border-box; padding: 23px 10px 0 10px; display: flex; flex-direction: column; align-items: stretch; background: linear-gradient(#a9a9bf, #333366 248px); }
        #track { flex: 1; border-left: 1px solid #e5e5e5; padding: 21px 7px 0 7px; }
        #thumb { height: 399px; background: #8a8a8a; }
      </style>
      <div id="scroll"><slot></slot></div>
      <div id="track"><div id="thumb"></div></div>`
  }
}

class FcCloseButton extends HTMLElement {
  constructor() {
    super()
    this.attachShadow({ mode: 'open' }).innerHTML = `
      <style>
        :host { display: flex; align-items: center; justify-content: center; align-self: center; box-sizing: border-box; width: 92px; height: 26px; background: #fff; border: 1px solid #d4d4d4; border-radius: 3px; font-size: 12px; margin-bottom: 23px; flex: none; }
      </style>
      <slot></slot>`
  }
}

class FcTaskpanel extends HTMLElement {
  connectedCallback() {
    if (this.shadowRoot) return
    this.attachShadow({ mode: 'open' }).innerHTML = `
      <style>
        :host { display: block; margin-bottom: 11px; flex: none; }
        #head { display: flex; align-items: center; box-sizing: border-box; height: 31px; border-radius: 4px 4px 0 0; padding: 0 4px 0 9px; background: linear-gradient(90deg, #ffffff, #d4dcf6 68%); border-bottom: 1px solid #b9c1d6; }
        #title { font-weight: 700; font-size: 13px; color: #2f5fdc; margin-left: 2px; letter-spacing: -0.15px; }
        #toggle { margin-left: auto; width: 18px; height: 18px; border-radius: 50%; background: #fff; box-shadow: 0 0 0 1px #c6cee6; display: flex; align-items: center; justify-content: center; margin-right: 1px; }
        #body { display: block; box-sizing: border-box; padding: 17px 18px 17px 16px; background: #d4dcf6; border: 1px solid #fff; border-top-color: #e8ecfa; }
      </style>
      <div id="head">
        <fc-icon name="sheet" size="17"></fc-icon>
        <svg width="7" height="7" style="margin-left:-4px;margin-top:-14px;flex:none"><circle cx="3.5" cy="3.5" r="3" fill="#ffe93b"/></svg>
        <span id="title">${this.getAttribute('title-text')}</span>
        <div id="toggle"><svg width="10" height="11"><path d="M1 5.5L5 1.5 9 5.5M1 10L5 6 9 10" fill="none" stroke="#0e3f9e" stroke-width="1.5"/></svg></div>
      </div>
      <div id="body"><slot></slot></div>`
  }
}

class FcDropButton extends HTMLElement {
  connectedCallback() {
    if (this.shadowRoot) return
    this.attachShadow({ mode: 'open' }).innerHTML = `
      <style>
        :host { display: flex; align-items: center; box-sizing: border-box; width: 40px; height: 24px; background: #fff; border: 1px solid #d8dbe8; border-radius: 3px; flex: none; padding-left: 3px; }
        #s { width: 1px; height: 20px; background: #888; margin: 0 4px 0 1px; }
        i { display: block; width: 0; height: 0; border: 4px solid transparent; border-top: 5px solid #000; border-bottom: 0; }
      </style>
      <fc-icon name="${this.getAttribute('icon')}" size="20"></fc-icon><div id="s"></div><i></i>`
  }
}

class FcSolverRow extends HTMLElement {
  connectedCallback() {
    if (this.shadowRoot) return
    this.attachShadow({ mode: 'open' }).innerHTML = `
      <style>
        :host { display: flex; align-items: center; font-size: 12px; height: 24px; margin-top: 1px; }
        #label { width: 185px; flex: none; }
        a { color: #0000ff; text-decoration: underline; }
        fc-drop-button { margin-left: auto; }
      </style>
      <span id="label">${this.getAttribute('label')}</span>
      <a>${this.getAttribute('link')}</a>
      <fc-drop-button icon="sync"></fc-drop-button>`
  }
}

class FcFilterRow extends HTMLElement {
  connectedCallback() {
    if (this.shadowRoot) return
    const eye = this.hasAttribute('eye')
    this.attachShadow({ mode: 'open' }).innerHTML = `
      <style>
        :host { display: flex; align-items: center; height: 24px; font-size: 12px; margin-bottom: 9px; }
        #check { width: 17px; height: 17px; border-radius: 3px; background: #0a5cba; display: flex; align-items: center; justify-content: center; flex: none; }
        #combo { flex: 1; height: 24px; box-sizing: border-box; display: flex; align-items: center; margin-left: 16px; margin-right: 11px; background: #fff; border: 1px solid #d8dbe8; border-radius: 4px; }
        #text { flex: 1; text-align: center; }
        #s { width: 1.5px; height: 20px; background: #666; }
        #arrow { width: 15px; display: flex; justify-content: center; }
        i { display: block; width: 0; height: 0; border: 4px solid transparent; border-top: 5px solid #000; border-bottom: 0; }
        #eye { width: 26px; height: 24px; box-sizing: border-box; background: #fff; border: 1px solid #d8dbe8; border-radius: 4px; display: flex; align-items: center; justify-content: center; margin-right: 11px; flex: none; }
      </style>
      <div id="check"><svg width="11" height="9"><path d="M1 5L4 8 10 1.5" fill="none" stroke="#fff" stroke-width="1.2"/></svg></div>
      <div id="combo"><span id="text">Filtros</span><div id="s"></div><div id="arrow"><i></i></div></div>
      ${eye ? '<div id="eye"><fc-icon name="eye" size="20"></fc-icon></div>' : ''}
      <fc-drop-button icon="tools"></fc-drop-button>`
  }
}

class FcList extends HTMLElement {
  connectedCallback() {
    if (this.shadowRoot) return
    this.attachShadow({ mode: 'open' }).innerHTML = `
      <style>
        :host { display: flex; box-sizing: border-box; width: 413px; height: 239px; border: 1px solid #8a8a8a; padding: 2px 0 0 2px; background: #fff; overflow: hidden; font-size: 14px; }
        #rows { flex: 1; min-width: 0; }
        #track { width: 22px; background: #efefef; flex: none; padding: 21px 8px 0 7px; box-sizing: border-box; margin-top: -2px; }
        #thumb { height: 23px; background: #8a8a8a; margin-top: 2px; }
      </style>
      <div id="rows"><slot></slot></div>
      <div id="track">${this.hasAttribute('thumb') ? '<div id="thumb"></div>' : ''}</div>`
  }
}

class FcListRow extends HTMLElement {
  connectedCallback() {
    if (this.shadowRoot) return
    this.attachShadow({ mode: 'open' }).innerHTML = `
      <style>
        :host { display: flex; align-items: center; height: 25px; padding-left: 4px; white-space: nowrap; }
        #box { width: 16px; height: 16px; box-sizing: border-box; border: 1px solid #555; border-radius: 3px; background: #fbfbfb; flex: none; margin-right: 7px; }
        fc-icon { margin-right: 8px; }
      </style>
      <div id="box"></div>
      <fc-icon name="${this.getAttribute('icon')}" size="20"></fc-icon>
      <slot></slot>`
  }
}

class FcElementRow extends HTMLElement {
  constructor() {
    super()
    this.attachShadow({ mode: 'open' }).innerHTML = `
      <style>
        :host { display: flex; align-items: center; height: 25px; padding-left: 4px; gap: 14px; margin-top: -2px; }
        #c { width: 14px; height: 16px; border-radius: 2px; background: #0a5cba; margin-right: 2px; }
        b { display: block; width: 8px; height: 8px; border-radius: 50%; background: #2233bb; }
      </style>
      <div id="c"></div><b></b><b></b><b style="background:#6fbf3a"></b>`
  }
}

class FcViewarea extends HTMLElement {
  constructor() {
    super()
    this.attachShadow({ mode: 'open' }).innerHTML = `
      <style>:host { display: flex; flex-direction: column; min-height: 0; }</style>
      <slot></slot>`
  }
}

class FcViewport extends HTMLElement {
  constructor() {
    super()
    const red = '#ff2600'
    const navFill = 'fill="#8d8dab" stroke="#0d0d0d" stroke-width="3"'
    this.attachShadow({ mode: 'open' }).innerHTML = `
      <style>
        :host { display: block; height: 649px; flex: none; }
        svg { display: block; width: 100%; height: 100%; font-family: "Liberation Sans", Arial, sans-serif; }
      </style>
      <svg viewBox="504 184 1416 649" preserveAspectRatio="none">
        <defs><linearGradient id="bg" x1="0" y1="0" x2="0" y2="1"><stop offset="0" stop-color="#333366"/><stop offset="1" stop-color="#9a9aae"/></linearGradient></defs>
        <rect x="504" y="184" width="1416" height="649" fill="url(#bg)"/>
        <path d="M504 184.5H1920" stroke="#1a2aa8"/>

        <path d="M858.5 418H1920M858.5 616H1920M858.5 418V616" fill="none" stroke="#fff" stroke-width="2.8"/>
        <path d="M504 665C590 730 700 790 830 833" fill="none" stroke="#fff" stroke-width="2.4"/>

        <g stroke="${red}" stroke-width="1.8" fill="none">
          <path d="M858.5 301V418M858.5 616V714"/>
          <path d="M858.5 321H1363M1424 321H1920"/>
          <path d="M535 695.5H858"/>
          <path d="M895 618V716M895 774V833"/>
          <path d="M875 616H1071" stroke-width="2"/>
        </g>
        <g fill="${red}">
          <path d="M859 321l10-5v10z"/>
          <path d="M1920 316v10l-5-5z"/>
          <path d="M858 695.5l-9-4.5v9z"/>
          <path d="M895 617l-4.5 9h9z"/>
          <circle cx="858.5" cy="418" r="4"/>
          <circle cx="858.5" cy="616" r="4"/>
          <rect x="1386" y="401" width="12" height="2"/>
          <rect x="1386" y="631" width="12" height="2"/>
          <rect x="841" y="510" width="2.4" height="14" stroke="#a33030" stroke-width=".5"/>
        </g>
        <g fill="#a52a2a" font-size="18">
          <text x="1393" y="327.5" text-anchor="middle">59 mm</text>
          <text x="505" y="702">mm</text>
          <text transform="translate(902 769) rotate(-90)">14 mm</text>
        </g>

        <g transform="translate(1740 170) scale(.33333)">
          <path d="M324 65L358 103H290Z" ${navFill}/>
          <path d="M288 418H360L324 458Z" ${navFill}/>
          <path d="M127 261L165 225V296Z" ${navFill}/>
          <path d="M482 225V296L521 261Z" ${navFill}/>
          <circle cx="495" cy="88" r="19" ${navFill}/>
          <path d="M272 86V108Q235 118 212 142L220 155L176 165L183 122L195 128Q225 98 272 86Z" ${navFill}/>
          <path d="M376 86V108Q413 118 436 142L428 155L472 165L465 122L453 128Q423 98 376 86Z" ${navFill}/>
          <path d="M248 167H398L418 187V335L398 355H248L229 335V187Z" ${navFill}/>
          <path d="M275 190H373L393 212V310L373 332H275L254 310V212Z" ${navFill}/>
          <path d="M275 167V190M373 167V190M275 332V355M373 332V355M229 212H254M229 310H254M393 212H418M393 310H418" stroke="#0d0d0d" stroke-width="3"/>
          <text x="324" y="269" font-size="22" text-anchor="middle" fill="#3a3a48">SUPERIOR</text>
          <rect x="216" y="210" width="5" height="155" fill="#00ff00"/>
          <rect x="222" y="364" width="153" height="5" fill="#ff0000"/>
          <rect x="216" y="365" width="5" height="5" fill="#0000ff"/>
          <path d="M457 373L487 385V417L457 430L428 417V385Z" ${navFill}/>
          <path d="M428 385L457 395L487 385M457 395V430" fill="none" stroke="#0d0d0d" stroke-width="3"/>
        </g>

        <g font-size="9.5" fill="#111">
          <rect x="1885" y="780" width="3.4" height="7" fill="#1f8a2a"/>
          <rect x="1902" y="799" width="7" height="4" fill="#8a1f2a"/>
          <circle cx="1888" cy="801" r="2.8" fill="#22228a"/>
          <text x="1888" y="778">Y</text>
          <text x="1888" y="800">Z</text>
          <text x="1910" y="800">X</text>
        </g>
      </svg>`
  }
}

class FcDocTabs extends HTMLElement {
  constructor() {
    super()
    this.attachShadow({ mode: 'open' }).innerHTML = `
      <style>:host { display: flex; align-items: flex-start; flex: 1; padding-left: 3px; background: #f0f0f0; }</style>
      <slot></slot>`
  }
}

class FcDocTab extends HTMLElement {
  connectedCallback() {
    if (this.shadowRoot) return
    const current = this.hasAttribute('current')
    const closeBg = current ? '#e5694a' : '#bdbdbd'
    this.attachShadow({ mode: 'open' }).innerHTML = `
      <style>
        :host { display: flex; align-items: center; box-sizing: border-box; width: ${this.getAttribute('width')}px; height: 26px; padding: 1px ${this.getAttribute('end')}px 0 ${this.getAttribute('pad')}px; font-size: ${this.getAttribute('size')}px; background: #f0f0f0; border-bottom: 1px solid #e0e0e0; flex: none; white-space: nowrap; }
        :host([current]) { height: 29px; background: #f8f8f8; border: 1px solid #e6e6e6; border-top: 0; padding-top: 2px; }
        #close { width: 17px; height: 17px; box-sizing: border-box; border-radius: 2px; background: ${closeBg}; border: 1px solid ${current ? '#d2593a' : '#a8a8a8'}; margin-left: auto; display: flex; align-items: center; justify-content: center; }
        span { margin-left: 5px; }
      </style>
      <fc-icon name="fc" size="20"></fc-icon>
      <span><slot></slot></span>
      <div id="close"><svg width="9" height="9"><path d="M1.5 1.5L7.5 7.5M7.5 1.5L1.5 7.5" stroke="#fff" stroke-width="2.2"/></svg></div>`
  }
}

class FcReport extends HTMLElement {
  connectedCallback() {
    if (this.shadowRoot) return
    this.attachShadow({ mode: 'open' }).innerHTML = `
      <style>
        :host { display: flex; flex-direction: column; height: 115px; flex: none; box-sizing: border-box; }
        #head { display: flex; align-items: center; box-sizing: border-box; height: 24px; padding: 0 6px 0 6px; background: #d9d9d9; border-top: 2px solid #bcbcbc; border-bottom: 1px solid #b5b5b5; border-right: 1px solid #b5b5b5; flex: none; }
        #head span { margin-right: auto; }
        #x { margin-left: 15px; margin-right: 2px; }
        #band { height: 5px; background: #f0f0f0; flex: none; }
        #content { display: flex; flex: 1; min-height: 0; border-bottom: 1px solid #999; background: #fff; }
        #log { flex: 1; overflow: hidden; }
        #lines { margin-top: -14px; padding-left: 6px; }
        #track { width: 21px; background: #efefef; box-sizing: border-box; padding: 42px 7px 0 7px; flex: none; }
        #thumb { height: 23px; background: #8a8a8a; }
      </style>
      <div id="head"><span>${this.getAttribute('title-text')}</span>${floatIcon}
        <svg id="x" width="11" height="11"><path d="M1 1L10 10M10 1L1 10" stroke="#333" stroke-width="1.8"/></svg>
      </div>
      <div id="band"></div>
      <div id="content">
        <div id="log"><div id="lines"><slot></slot></div></div>
        <div id="track"><div id="thumb"></div></div>
      </div>`
  }
}

class FcLogLine extends HTMLElement {
  constructor() {
    super()
    this.attachShadow({ mode: 'open' }).innerHTML = `<style>:host { display: block; height: 20px; line-height: 20px; font-family: "DejaVu Sans Mono", monospace; font-size: 15.8px; color: #ff0000; white-space: pre; }</style><slot></slot>`
  }
}

class FcStatusbar extends HTMLElement {
  constructor() {
    super()
    this.attachShadow({ mode: 'open' }).innerHTML = `
      <style>
        :host { display: flex; align-items: center; flex: none; height: 37px; padding: 0 9px 0 7px; background: #f0f0f0; font-size: 14px; }
        #msg { margin-right: auto; }
        #nav { display: flex; align-items: center; font-size: 12.5px; }
        #nav span { margin: 0 13px 0 7px; }
        i { display: block; width: 0; height: 0; border: 4.5px solid transparent; border-top: 5px solid #111; border-bottom: 0; }
        #s { width: 1px; height: 30px; background: #dadada; margin: 0 10px 0 10px; }
        #coords { font-size: 12.6px; margin-right: 2px; }
      </style>
      <span id="msg"><slot></slot></span>
      <div id="nav">
        <svg width="12" height="18"><rect x="1" y="1" width="10" height="16" rx="5" fill="none" stroke="#333" stroke-width="1.4"/><path d="M6 3V6" stroke="#333" stroke-width="1.4"/></svg>
        <span>CAD</span><i></i>
      </div>
      <div id="s"></div>
      <span id="coords">78,30 mm x 35,83 mm</span><i></i>`
  }
}

// the open arc drop down and its tooltip, both lie over the toolbars
class FcArcMenu extends HTMLElement {
  constructor() {
    super()
    this.attachShadow({ mode: 'open' }).innerHTML = `
      <style>
        :host { display: block; position: absolute; left: 993px; top: 140px; z-index: 5; font-size: 14px; }
        #menu { width: 300px; box-sizing: border-box; padding: 3px 4px 4px; background: #f2f2f2; border: 1px solid #e0e0e0; box-shadow: 2px 3px 5px rgba(0,0,0,.35); }
        .item { display: flex; align-items: center; height: 27px; }
        .ico { width: 26px; height: 27px; display: flex; align-items: center; justify-content: center; background: #f7f7f7; margin-right: 7px; flex: none; }
        .hl { background: #90c8f6; }
        .hl .ico { background: #a6d3f7; }
        #tip { position: absolute; left: 51px; top: 26px; box-sizing: border-box; width: 294px; height: 24px; background: #fbfbfb; border: 1px solid #e4e4e4; color: #575757; line-height: 22px; padding-left: 7px; white-space: nowrap; box-shadow: 2px 3px 5px rgba(0,0,0,.35); }
      </style>
      <div id="menu">
        <div class="item hl"><div class="ico"><fc-icon name="arc" size="22"></fc-icon></div>Centro y puntos finales</div>
        <div class="item"><div class="ico"><fc-icon name="arc3" size="22"></fc-icon></div>Puntos finales y perímetro</div>
      </div>
      <div id="tip">Crea un arco por su centro y sus extremos</div>`
  }
}

customElements.define('fc-icon', FcIcon)
customElements.define('fc-app', FcApp)
customElements.define('fc-titlebar', FcTitlebar)
customElements.define('fc-menubar', FcMenubar)
customElements.define('fc-menu', FcMenu)
customElements.define('fc-toolbar', FcToolbar)
customElements.define('fc-group', FcGroup)
customElements.define('fc-sep', FcSep)
customElements.define('fc-gap', FcGap)
customElements.define('fc-tool', FcTool)
customElements.define('fc-workbench', FcWorkbench)
customElements.define('fc-workspace', FcWorkspace)
customElements.define('fc-dock', FcDock)
customElements.define('fc-tabs', FcTabs)
customElements.define('fc-tab', FcTab)
customElements.define('fc-taskview', FcTaskview)
customElements.define('fc-close-button', FcCloseButton)
customElements.define('fc-taskpanel', FcTaskpanel)
customElements.define('fc-drop-button', FcDropButton)
customElements.define('fc-solver-row', FcSolverRow)
customElements.define('fc-filter-row', FcFilterRow)
customElements.define('fc-list', FcList)
customElements.define('fc-list-row', FcListRow)
customElements.define('fc-element-row', FcElementRow)
customElements.define('fc-viewarea', FcViewarea)
customElements.define('fc-viewport', FcViewport)
customElements.define('fc-doc-tabs', FcDocTabs)
customElements.define('fc-doc-tab', FcDocTab)
customElements.define('fc-report', FcReport)
customElements.define('fc-log-line', FcLogLine)
customElements.define('fc-statusbar', FcStatusbar)
customElements.define('fc-arc-menu', FcArcMenu)
</script>
</body>
</html>
